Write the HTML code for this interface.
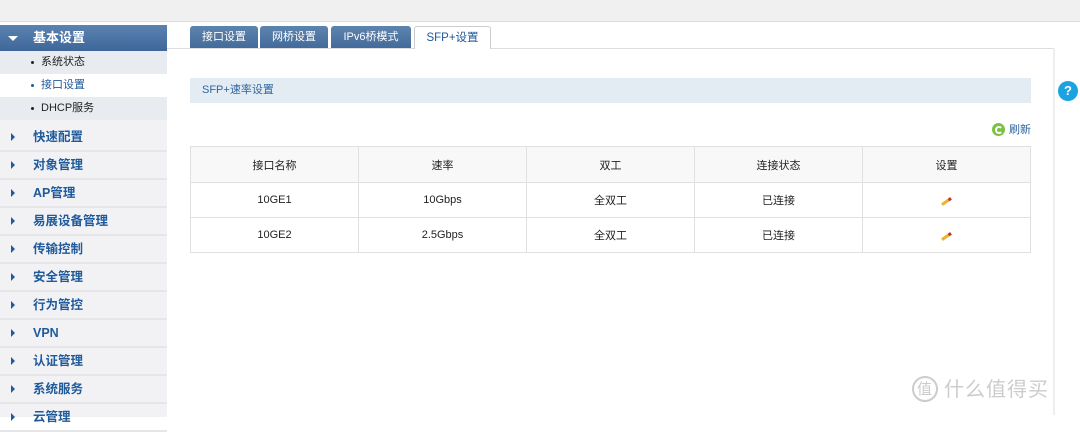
<!DOCTYPE html>
<html><head><meta charset="utf-8"><style>
*{margin:0;padding:0;box-sizing:border-box}
body{width:1080px;height:415px;overflow:hidden;background:#fff;font-family:"Liberation Sans","Noto Sans CJK SC",sans-serif;font-size:11px;color:#333;position:relative}
.top{position:absolute;left:0;top:0;width:1080px;height:22px;background:#f0f0f0;border-bottom:1px solid #ddd}
.side{position:absolute;left:0;top:25px;width:167px;height:392px;background:#f2f2f5}
.hd{height:26px;background:linear-gradient(#5b82b0,#3e679a);color:#fff;font-weight:bold;font-size:13px;line-height:26px;padding-left:33px;position:relative}
.hd:before{content:"";position:absolute;left:8px;top:11px;border-left:5px solid transparent;border-right:5px solid transparent;border-top:5px solid #fff}
.sub{height:23px;line-height:23px;padding-left:28px;font-size:11px;color:#222;position:relative;background:#e8ecf1}
.sub:before{content:"";position:absolute;left:31px;top:10px;width:3px;height:3px;background:#222;border-radius:50%}
.sub span{padding-left:13px}
.sub.on{background:#fff;color:#1f5a9a}
.sub.on:before{background:#1f5a9a}
.it{height:28px;line-height:26px;border-bottom:2px solid #e6e6e8;padding-left:33px;color:#1f5a9a;font-weight:bold;font-size:12.5px;position:relative}
.it:before{content:"";position:absolute;left:11px;top:9px;border-top:4px solid transparent;border-bottom:4px solid transparent;border-left:4px solid #1f5a9a}
.tab{position:absolute;top:26px;height:22px;line-height:22px;text-align:center;color:#fff;background:linear-gradient(#5e83ae,#436b9b);border-radius:3px 3px 0 0;font-size:11px}
.tab.act{background:#fff;color:#1f5a9a;border:1px solid #ccc;border-bottom:none;height:23px;font-size:11.5px}
.line{position:absolute;left:167px;top:48px;width:886px;height:1px;background:#ddd}
.bar{position:absolute;left:190px;top:78px;width:841px;height:25px;background:#e4ecf3;color:#2d66a0;line-height:25px;padding-left:12px;font-size:11px}
.ref{position:absolute;left:992px;top:123px;color:#2d66a0;font-size:11px;line-height:14px}
.ref i{display:inline-block;width:13px;height:13px;border-radius:50%;background:#7bc142;vertical-align:-3px;margin-right:4px;position:relative}
.ref i:after{content:"";position:absolute;left:3px;top:3px;width:4px;height:4px;border:2px solid #fff;border-radius:50%;border-right-color:transparent}
table{position:absolute;left:190px;top:146px;width:841px;border-collapse:collapse;font-size:11px}
td{border:1px solid #e0e0e0;text-align:center;height:35px;width:168px;color:#222}
tr:first-child td{background:#f8f8f8;height:36px}
.pen{display:inline-block;width:11px;height:3px;background:#f0b030;transform:rotate(-35deg);position:relative;border-right:3px solid #c0392b}
.vline{position:absolute;left:1053px;top:48px;width:2px;height:367px;background:#eee}
.help{position:absolute;left:1058px;top:81px;width:20px;height:20px;border-radius:50%;background:#1aa3e0;color:#fff;font-weight:bold;font-size:13px;text-align:center;line-height:20px}
.wm{position:absolute;left:912px;top:373px;color:#ccc;font-size:20px;font-family:"Noto Sans CJK SC",sans-serif;letter-spacing:1px}
.wm b{display:inline-block;width:26px;height:26px;border:2px solid #ccc;border-radius:50%;font-size:15px;line-height:22px;text-align:center;font-weight:normal;margin-right:6px;vertical-align:2px}
</style></head><body>
<div class="top"></div>
<div class="side">
<div class="hd">基本设置</div>
<div class="sub"><span>系统状态</span></div>
<div class="sub on"><span>接口设置</span></div>
<div class="sub"><span>DHCP服务</span></div>
<div style="height:4px;background:#f2f2f5"></div>
<div class="it">快速配置</div>
<div class="it">对象管理</div>
<div class="it">AP管理</div>
<div class="it">易展设备管理</div>
<div class="it">传输控制</div>
<div class="it">安全管理</div>
<div class="it">行为管控</div>
<div class="it">VPN</div>
<div class="it">认证管理</div>
<div class="it">系统服务</div>
<div class="it">云管理</div>
</div>
<div class="tab" style="left:190px;width:68px">接口设置</div>
<div class="tab" style="left:260px;width:68px">网桥设置</div>
<div class="tab" style="left:331px;width:80px">IPv6桥模式</div>
<div class="line"></div>
<div class="tab act" style="left:414px;width:77px">SFP+设置</div>
<div class="bar">SFP+速率设置</div>
<div class="ref"><i></i>刷新</div>
<table>
<tr><td>接口名称</td><td>速率</td><td>双工</td><td>连接状态</td><td>设置</td></tr>
<tr><td>10GE1</td><td>10Gbps</td><td>全双工</td><td>已连接</td><td><span class="pen"></span></td></tr>
<tr><td>10GE2</td><td>2.5Gbps</td><td>全双工</td><td>已连接</td><td><span class="pen"></span></td></tr>
</table>
<div class="vline"></div>
<div class="help">?</div>
<div class="wm"><b>值</b>什么值得买</div>
</body></html>
